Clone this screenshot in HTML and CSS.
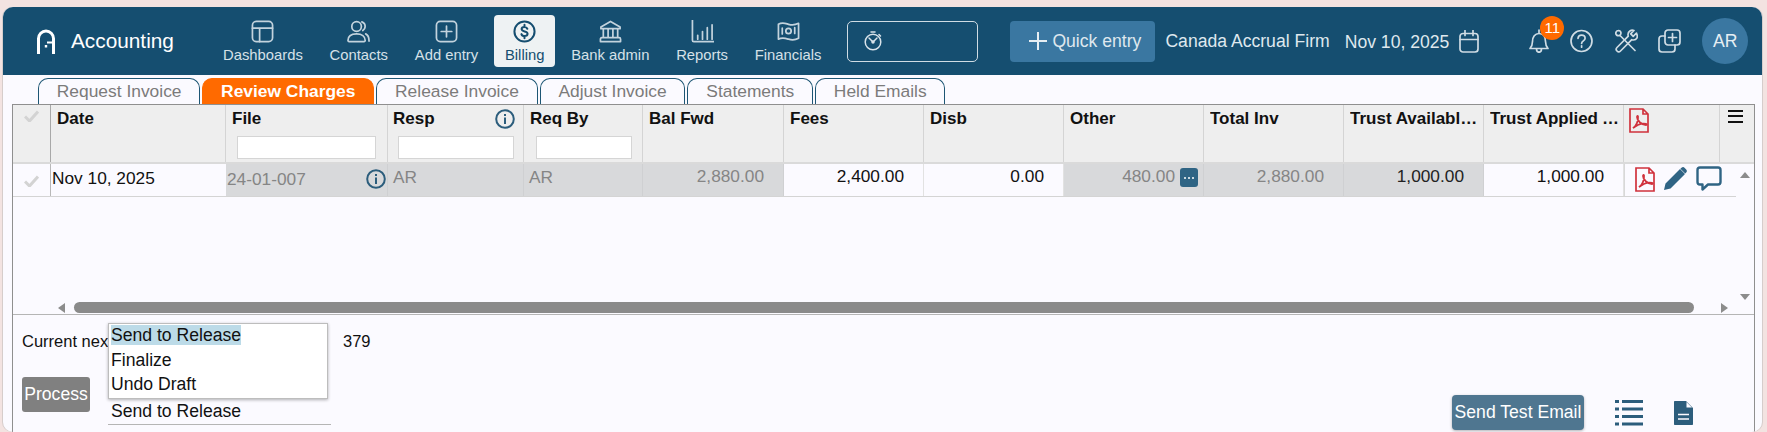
FILE: index.html
```html
<!DOCTYPE html>
<html lang="en">
<head>
<meta charset="utf-8">
<title>Accounting - Review Charges</title>
<link rel="stylesheet" href="styles.css">
</head>
<body>
<div class="window">
  <header class="topbar">
    <div class="brand">
      <svg class="logo" viewBox="0 0 18 25" fill="none" stroke="#fff"><path d="M1.500 25V9.500a7.500 7.500 0 0 1 15 0V25" stroke-width="3"/><path d="M10 13.500h6" stroke-width="2"/><path d="M9 16v2.500" stroke-width="2.400"/></svg>
      <span class="brand-name">Accounting</span>
    </div>
    <nav class="nav">
      <a class="nav-item"><svg class="nav-icon" viewBox="0 0 24 24"><rect x="1.500" y="1.500" width="21" height="21" rx="4"/><path d="M1.500 8.500h21M9 8.500v14"/></svg>Dashboards</a>
      <a class="nav-item"><svg class="nav-icon" viewBox="0 0 24 24"><circle cx="10" cy="6.800" r="5"/><path d="M1 21.500c0-4.500 3.500-7 9-7s9 2.500 9 7c0 .6-.4 1-1 1H2c-.6 0-1-.4-1-1zM15.500 2c2.500 1 3.600 3 3.400 5.200-.1 1.600-1 2.900-2.400 3.800M19.500 14.500c2.200 1 3.500 3.500 3.500 7.500"/></svg>Contacts</a>
      <a class="nav-item"><svg class="nav-icon" viewBox="0 0 24 24"><rect x="1.500" y="1.500" width="21" height="21" rx="4"/><path d="M12 6.500v11M6.500 12h11"/></svg>Add entry</a>
      <a class="nav-item is-active"><svg class="nav-icon" viewBox="0 0 24 24"><circle cx="12" cy="12" r="10.500"/><path d="M15 9.200c-.4-1.200-1.500-1.900-3-1.900-1.700 0-3 .8-3 2.200 0 3.200 6.200 1.600 6.200 4.800 0 1.500-1.400 2.400-3.200 2.400-1.600 0-2.800-.7-3.200-2M12 5v2.300M12 16.700V19"/></svg>Billing</a>
      <a class="nav-item"><svg class="nav-icon" viewBox="0 0 24 24"><path d="M2 9v-1.800L12 1.500l10 5.700V9zM4.500 9v9M9.500 9v9M14.500 9v9M19.500 9v9M3 18.500h18M1.500 22.500h21v-2.500c0-.8-.5-1.500-1.500-1.500H3c-1 0-1.500.7-1.500 1.500z"/></svg>Bank admin</a>
      <a class="nav-item"><svg class="nav-icon" viewBox="0 0 24 24"><path d="M1.500 0v21c0 1 .5 1.500 1.500 1.500h21M7 20v-4M12 20v-8M17 20v-12M22 20v-15"/></svg>Reports</a>
      <a class="nav-item"><svg class="nav-icon" viewBox="0 0 24 24"><path d="M1.500 4.500c4-2.500 7-1 10.500 0s7 .8 10.500-1v15.500c-3.500 2-7 2-10.500 1s-6.500-2-10.500 0z"/><circle cx="12" cy="11.500" r="2.800"/><path d="M5.500 8.500v6M18.500 8v6"/></svg>Financials</a>
    </nav>
    <div class="timer">
      <svg class="timer-icon" viewBox="0 0 18 20"><circle cx="9" cy="11" r="7.800"/><path d="M7 1h4M15 3.500l1.500 1.500M5 7l4 4 4-4"/><circle cx="9" cy="11" r="1" fill="#d8e3ea"/></svg>
    </div>
    <button class="quick" type="button"><svg class="quick-plus" viewBox="0 0 18 18"><path d="M9 0v18M0 9h18"/></svg>Quick entry</button>
    <span class="firm">Canada Accrual Firm</span>
    <span class="today">Nov 10, 2025</span>
    <svg class="cal" viewBox="0 0 20 23"><rect x="1" y="3.500" width="18" height="18.500" rx="3"/><path d="M1 9.500h18M6 .5v5M14 .5v5"/></svg>
    <div class="bell-wrap">
      <svg class="tool-icon bell" viewBox="0 0 20 24"><path d="M1 19.500c1.800-2 2.500-3 2.500-7 0-4.500 2.500-8 6.500-8s6.500 3.500 6.500 8c0 4 .7 5 2.500 7zM10 1v3.500M7.500 19.800c0 2.200 1 3.400 2.500 3.400s2.500-1.200 2.500-3.400"/></svg>
      <span class="badge">11</span>
    </div>
    <svg class="tool-icon help" viewBox="0 0 23 23"><circle cx="11.500" cy="11.500" r="10.500"/><path d="M8 8.800c.2-2 1.700-3.200 3.600-3.200 2 0 3.500 1.300 3.500 3.100 0 2.700-3.500 2.600-3.500 5.300"/><path d="M11.600 16.300v1.400"/></svg>
    <svg class="tool-icon tools" viewBox="0 0 23 24"><path d="M5 6.500 20 21.500M3.500 1.500a2.700 2.700 0 0 0-2 4.500 2.700 2.700 0 0 0 4.500-2 2.700 2.700 0 0 0-2.500-2.500z"/><path d="M21.500 4l-3.300 3.300-2.500-2.500L19 1.500c-3-1-6 1-6 4 0 .6.100 1.200.3 1.700L2 18.500c-1 1-1 2.500 0 3.500s2.500 1 3.500 0l11.300-11.300c.5.200 1.100.3 1.700.3 3 0 5-3 3-6.500z"/></svg>
    <svg class="tool-icon dup" viewBox="0 0 23 24"><rect x="7" y="1" width="15" height="15" rx="3"/><path d="M7 7H4c-1.700 0-3 1.300-3 3v10c0 1.700 1.300 3 3 3h10c1.700 0 3-1.300 3-3v-4M14.500 4.500v8M10.500 8.500h8"/></svg>
    <div class="avatar">AR</div>
  </header>

  <div class="tabs">
    <a class="tab">Request Invoice</a>
    <a class="tab is-current">Review Charges</a>
    <a class="tab">Release Invoice</a>
    <a class="tab">Adjust Invoice</a>
    <a class="tab">Statements</a>
    <a class="tab">Held Emails</a>
  </div>

  <section class="frame">
    <div class="grid">
      <div class="grid-head">
        <div class="hcell hcheck"><svg class="check" viewBox="0 0 15 12"><path d="M1 6.500 5.500 11 14 1.500"/></svg></div>
        <div class="hcell"><span class="hlabel">Date</span></div>
        <div class="hcell"><span class="hlabel">File</span><input class="filter filter-file" type="text"></div>
        <div class="hcell hresp"><div class="hline"><span class="hlabel">Resp</span><svg class="info info-head" viewBox="0 0 20 20"><circle cx="10" cy="10" r="8.800"/><path d="M10 8.500v6.500M10 5v2"/></svg></div><input class="filter filter-resp" type="text"></div>
        <div class="hcell"><span class="hlabel">Req By</span><input class="filter filter-req" type="text"></div>
        <div class="hcell"><span class="hlabel">Bal Fwd</span></div>
        <div class="hcell"><span class="hlabel">Fees</span></div>
        <div class="hcell"><span class="hlabel">Disb</span></div>
        <div class="hcell"><span class="hlabel">Other</span></div>
        <div class="hcell"><span class="hlabel">Total Inv</span></div>
        <div class="hcell"><span class="hlabel">Trust Available Amount</span></div>
        <div class="hcell"><span class="hlabel">Trust Applied Amount</span></div>
        <div class="hcell hpdf">
          <svg class="pdf pdf-head" viewBox="0 0 20 25"><path d="M1 1h13l5 5v18H1zM14 1v5h5" fill="none"/><path class="swirl" d="M4 20c3-1.500 5.500-7 5-11.500 0-1-1-1-1 .5 0 4 5 8 9 8 1 0 1-1 0-1.200-4-.8-9 1-13 4.200z" fill="none"/></svg>
        </div>
        <div class="hcell hmenu"><span class="burger"></span></div>
      </div>
      <div class="grid-body">
        <div class="rows">
          <div class="row">
            <div class="cell ccheck"><svg class="check" viewBox="0 0 15 12"><path d="M1 6.500 5.500 11 14 1.500"/></svg></div>
            <div class="cell cdate">Nov 10, 2025</div>
            <div class="cell muted cfile"><span>24-01-007</span><svg class="info" viewBox="0 0 20 20"><circle cx="10" cy="10" r="8.800"/><path d="M10 8.500v6.500M10 5v2"/></svg></div>
            <div class="cell muted ctext">AR</div>
            <div class="cell muted ctext">AR</div>
            <div class="cell muted num">2,880.00</div>
            <div class="cell num">2,400.00</div>
            <div class="cell num">0.00</div>
            <div class="cell muted num cother">480.00<span class="more"><i></i><i></i><i></i></span></div>
            <div class="cell muted num">2,880.00</div>
            <div class="cell muted num dark">1,000.00</div>
            <div class="cell num">1,000.00</div>
            <div class="cell cactions">
              <svg class="pdf" viewBox="0 0 20 25"><path d="M1 1h13l5 5v18H1zM14 1v5h5" fill="none"/><path class="swirl" d="M4 20c3-1.500 5.500-7 5-11.500 0-1-1-1-1 .5 0 4 5 8 9 8 1 0 1-1 0-1.200-4-.8-9 1-13 4.200z" fill="none"/></svg>
              <svg class="pen" viewBox="0 0 23 23"><path d="M0 23l1.500-6.500L16 2l5 5L6.500 21.500zM17.500.8c1-1 2.200-1 3 0l1.700 1.700c.8.800 1 2 0 3l-1 1-4.800-4.800z"/></svg>
              <svg class="chat" viewBox="0 0 26 25"><path d="M4 1.500h18c1.400 0 2.500 1.100 2.500 2.500v12c0 1.400-1.100 2.500-2.500 2.500H12l-5.500 5v-5H4c-1.400 0-2.500-1.100-2.500-2.500V4c0-1.400 1.100-2.500 2.500-2.500z"/></svg>
            </div>
          </div>
        </div>
        <div class="vscroll"><span class="arrow-up"></span><span class="arrow-down"></span></div>
      </div>
      <div class="hscroll"><span class="arrow-left"></span><span class="thumb"></span><span class="arrow-right"></span></div>
    </div>

    <div class="footer">
      <div class="footer-left">
        <span class="flabel">Current next</span>
        <span></span>
        <span class="fnum">379</span>
        <button class="process" type="button">Process</button>
        <div class="select-value">Send to Release</div>
      </div>
      <div class="listbox">
        <div class="opt is-selected"><span>Send to Release</span></div>
        <div class="opt">Finalize</div>
        <div class="opt">Undo Draft</div>
      </div>
      <div class="footer-right">
        <button class="send" type="button">Send Test Email</button>
        <svg class="list-icon" viewBox="0 0 28 27"><path d="M0 1h4v3H0zM7 1h21v3H7zM0 8.500h4v3H0zM7 8.500h21v3H7zM0 16h4v3H0zM7 16h21v3H7zM0 23.500h4v3H0zM7 23.500h21v3H7z"/></svg>
        <svg class="doc-icon" viewBox="0 0 19 24"><path d="M1 0h11l7 7v16c0 .6-.4 1-1 1H1c-.6 0-1-.4-1-1V1c0-.6.400-1 1-1z"/><path class="doc-fold" d="M12.500 1v5.500H18z"/><path class="doc-line" d="M4 13.500h11M4 18h11"/></svg>
      </div>
    </div>
  </section>
</div>
</body>
</html>
```

FILE: styles.css
```css
* { box-sizing: border-box; }
html, body { margin: 0; height: 100%; overflow: hidden; }
body {
  background: #f3e3e1;
  font-family: "Liberation Sans", Arial, sans-serif;
  color: #111;
}
.window {
  margin: 7px 5px 0 3px;
  height: 425px;
  background: #fbfaff;
  border-radius: 10px;
  box-shadow: 1px 0 0 #d6cdcb, -1px 0 0 #d6cdcb;
  overflow: hidden;
  display: flex;
  flex-direction: column;
}

/* top bar */
.topbar {
  flex: 0 0 68px;
  background: #154e70;
  display: flex;
  align-items: center;
  padding-left: 34px;
  color: #dfe8ee;
}
.brand { display: flex; align-items: center; gap: 16px; width: 175px; }
.logo { width: 18px; height: 25px; }
.brand-name { font-size: 20.800px; color: #fff; }
.nav { display: flex; gap: 4.800px; }
.nav-item {
  display: flex;
  flex-direction: column;
  align-items: center;
  height: 52px;
  padding: 5px 11px 0;
  font-size: 14.800px;
  line-height: 18px;
  color: #d6e1e8;
  border-radius: 4px;
}
.nav-icon {
  width: 23px;
  height: 23px;
  margin-bottom: 3px;
  fill: none;
  stroke: #c3d3dd;
  stroke-width: 1.800;
  stroke-linecap: round;
  stroke-linejoin: round;
}
.nav-item.is-active { background: #eef2f3; color: #154e70; }
.nav-item.is-active .nav-icon { stroke: #154e70; stroke-width: 2.100; }
.timer {
  width: 131px;
  height: 41px;
  margin-left: 15px;
  border: 1px solid #cfdce4;
  border-radius: 5px;
  display: flex;
  align-items: center;
  padding-left: 16px;
}
.timer-icon { width: 18px; height: 20px; fill: none; stroke: #d8e3ea; stroke-width: 1.500; stroke-linecap: round; }
.quick {
  width: 145px;
  height: 41px;
  margin-left: 32px;
  border: 0;
  border-radius: 4px;
  background: #3a77a1;
  color: #dfe8ee;
  font: 17.600px "Liberation Sans", Arial, sans-serif;
  display: flex;
  align-items: center;
  gap: 5px;
  padding: 0 0 0 19px;
}
.quick-plus { width: 18px; height: 18px; stroke: #e6eef3; stroke-width: 2; fill: none; flex: none; }
.firm { margin-left: 10px; font-size: 17.600px; white-space: nowrap; }
.today { margin-left: 15px; font-size: 17.600px; white-space: nowrap; position: relative; top: 1px; }
.cal { width: 20px; height: 23px; margin-left: 10px; fill: none; stroke: #cfdce4; stroke-width: 1.700; stroke-linecap: round; }
.bell-wrap { position: relative; width: 20px; height: 24px; margin-left: 50px; }
.tool-icon { width: 23px; height: 24px; fill: none; stroke: #cfdce4; stroke-width: 1.700; stroke-linecap: round; stroke-linejoin: round; display: block; }
.bell { width: 20px; height: 24px; }
.badge {
  position: absolute;
  left: 11px;
  top: -13px;
  width: 24px;
  height: 24px;
  border-radius: 50%;
  background: #ff6a00;
  color: #fff;
  font-size: 15px;
  line-height: 24px;
  text-align: center;
}
.help { margin-left: 21px; }
.tools { margin-left: 22px; }
.dup { margin-left: 20px; }
.avatar {
  width: 46px;
  height: 46px;
  margin-left: 21px;
  border-radius: 50%;
  background: #3a77a1;
  color: #e6eef3;
  font-size: 17.600px;
  line-height: 46px;
  text-align: center;
}

/* tabs */
.tabs { flex: none; display: flex; gap: 2px; padding: 3px 0 0 35px; height: 29px; }
.tab {
  height: 26px;
  padding: 0 17.800px;
  border: 1px solid #1d5674;
  border-bottom: 0;
  border-radius: 10px 10px 0 0;
  font-size: 17.400px;
  line-height: 25px;
  color: #7b7b7b;
  white-space: nowrap;
}
.tab.is-current { background: #ff6a00; border-color: #ff6a00; color: #fff; font-weight: 700; }

/* framed grid */
.frame {
  flex: 1;
  margin: 0 7px 0 9px;
  border-left: 1px solid #8f8f8f;
  border-right: 1px solid #8f8f8f;
  display: flex;
  flex-direction: column;
  min-height: 0;
  position: relative;
}
.grid {
  flex: 0 0 211px;
  border-top: 1px solid #8f8f8f;
  border-bottom: 1px solid #b5b5b5;
  display: flex;
  flex-direction: column;
}
.grid-head, .row {
  display: grid;
}
.grid-head { grid-template-columns: 38px 175px 162px 136px 119px 141px 140px 140px 140px 140px 140px 140px 96px 1fr; height: 59px; background: #eee; border-bottom: 2px solid #dadada; }
.hcell {
  min-width: 0;
  border-right: 1px solid #d4d4d4;
  padding: 3px 0 0 6px;
  position: relative;
}
.hcheck { border-right-color: #a8a8a8; padding: 5px 0 0 11px; }
.hlabel {
  display: block;
  font-size: 17px;
  line-height: 22px;
  font-weight: 700;
  white-space: nowrap;
  overflow: hidden;
  text-overflow: ellipsis;
}
.hline { display: flex; justify-content: space-between; align-items: center; padding-right: 8px; }
.hresp { padding-left: 5px; }
.filter {
  display: block;
  height: 23px;
  margin-top: 6px;
  background: #fff;
  border: 1px solid #d5d5d5;
  border-radius: 0;
  padding: 0;
}
.filter-file { width: 139px; margin-left: 5px; }
.filter-resp { width: 116px; margin-left: 5px; }
.filter-req { width: 96px; margin-left: 6px; }
.check { width: 15px; height: 12px; fill: none; stroke: #d3d3d3; stroke-width: 3; display: block; }
.info { width: 20px; height: 20px; flex: none; fill: none; stroke: #2c5d7c; stroke-width: 2; }
.info-head { width: 20px; height: 20px; margin-top: -1px; }
.hpdf { padding: 3px 0 0 5px; border-right: 1px solid #d4d4d4; }
.pdf { width: 20px; height: 25px; stroke: #d0323d; stroke-width: 1.700; display: block; }
.swirl { stroke-width: 1.800; }
.hmenu { border-right: 0; padding: 5px 0 0 8px; }
.burger {
  display: block;
  width: 15px;
  height: 13px;
  border-top: 2.500px solid #111;
  border-bottom: 2.500px solid #111;
  position: relative;
}
.burger::after { content: ""; position: absolute; left: 0; right: 0; top: 2.500px; height: 2.500px; background: #111; }

.grid-body { flex: 1; display: flex; min-height: 0; }
.rows { flex: 0 0 1723px; }
.row {
  grid-template-columns: 38px 175px 162px 136px 119px 141px 140px 140px 140px 140px 140px 140px 112px;
  height: 33px;
  border-bottom: 1px solid #d4d4d4;
  font-size: 17.300px;
}
.cell { min-width: 0; line-height: 24px; white-space: nowrap; border-right: 1px solid #e2e2e2; }
.ccheck { border-right: 1px solid #b8b8b8; padding: 11px 0 0 11px; }
.cdate { padding: 2px 0 0 1px; border-right: 0; }
.muted { background: #d8d9db; color: #858585; border-right: 1px solid #cfd0d2; }
.ctext { padding: 1px 0 0 5px; }
.cfile { display: flex; justify-content: space-between; padding: 3px 1px 0 1px; }
.cfile .info { margin-top: 2px; }
.num { text-align: right; padding-right: 19px; }
.dark { color: #222; }
.cother { padding-right: 5px; display: flex; justify-content: flex-end; gap: 5px; }
.more {
  width: 18px;
  height: 19px;
  margin-top: 4px;
  background: #2f6484;
  border-radius: 3px;
  display: flex;
  align-items: center;
  justify-content: center;
  gap: 2px;
}
.more i { width: 2px; height: 2px; background: #fff; border-radius: 50%; }
.cactions { display: flex; gap: 9px; padding: 3px 0 0 10px; align-items: flex-start; border-right: 0; border-left: 1px solid #d8d8d8; }
.pen { width: 23px; height: 23px; fill: #2f6484; }
.chat { width: 26px; height: 25px; fill: none; stroke: #2f6484; stroke-width: 2.400; stroke-linejoin: round; margin-top: -1px; }

.vscroll {
  flex: 1;
  display: flex;
  flex-direction: column;
  justify-content: space-between;
  align-items: flex-end;
  padding: 8px 4px 1px 0;
}
.arrow-up { width: 0; height: 0; border: 5px solid transparent; border-top: 0; border-bottom: 6px solid #8c8c8c; }
.arrow-down { width: 0; height: 0; border: 5px solid transparent; border-bottom: 0; border-top: 6px solid #8c8c8c; }
.hscroll { flex: 0 0 13px; display: flex; align-items: center; padding-left: 45px; }
.arrow-left { width: 0; height: 0; border: 5px solid transparent; border-left: 0; border-right: 7px solid #8c8c8c; }
.thumb { width: 1620px; height: 11px; margin-left: 9px; border-radius: 6px; background: #8a8a8a; }
.arrow-right { width: 0; height: 0; margin-left: 27px; border: 5px solid transparent; border-right: 0; border-left: 7px solid #8c8c8c; }

/* footer */
.footer { flex: 1; display: flex; justify-content: space-between; padding: 16px 61px 0 9px; position: relative; }
.footer-left {
  display: grid;
  grid-template-columns: 86px 235px auto;
  grid-template-rows: 20px 48px;
  row-gap: 26px;
  font-size: 17.600px;
  line-height: 20px;
  align-self: flex-start;
}
.flabel { white-space: nowrap; overflow: hidden; font-size: 16.500px; }
.fnum { font-size: 16.500px; }
.process {
  width: 68px;
  height: 35px;
  border: 0;
  border-radius: 3px;
  background: #808080;
  color: #fff;
  font: 17.600px "Liberation Sans", Arial, sans-serif;
  padding: 0;
  align-self: start;
}
.select-value {
  grid-column: 2;
  width: 223px;
  padding: 0 0 2px 3px;
  line-height: 22px;
  border-bottom: 1px solid #b5b5b5;
  align-self: end;
}
.listbox {
  position: absolute;
  left: 95px;
  top: 8px;
  width: 220px;
  height: 76px;
  background: #fff;
  border: 1px solid #bdbdbd;
  box-shadow: 0 1px 3px rgba(0, 0, 0, .3);
  padding: 1px 0 0 2px;
  font-size: 17.600px;
}
.opt { height: 24px; line-height: 24px; }
.opt:first-child { height: 20px; line-height: 20px; margin-bottom: 3px; }
.is-selected span { display: inline-block; background: #bcdbe8; }
.footer-right { display: flex; align-items: center; gap: 31px; height: 35px; margin-top: 64px; }
.send {
  width: 132px;
  height: 35px;
  border: 0;
  border-radius: 4px;
  background: #4f7690;
  box-shadow: 0 1px 3px rgba(0, 0, 0, .3);
  color: #fff;
  font: 17.600px "Liberation Sans", Arial, sans-serif;
  padding: 0;
  white-space: nowrap;
}
.list-icon { width: 28px; height: 27px; fill: #2c5d7c; }
.doc-icon { width: 19px; height: 24px; fill: #2c5d7c; }
.doc-fold { fill: #fbfaff; }
.doc-line { fill: none; stroke: #fbfaff; stroke-width: 1.500; }
```
